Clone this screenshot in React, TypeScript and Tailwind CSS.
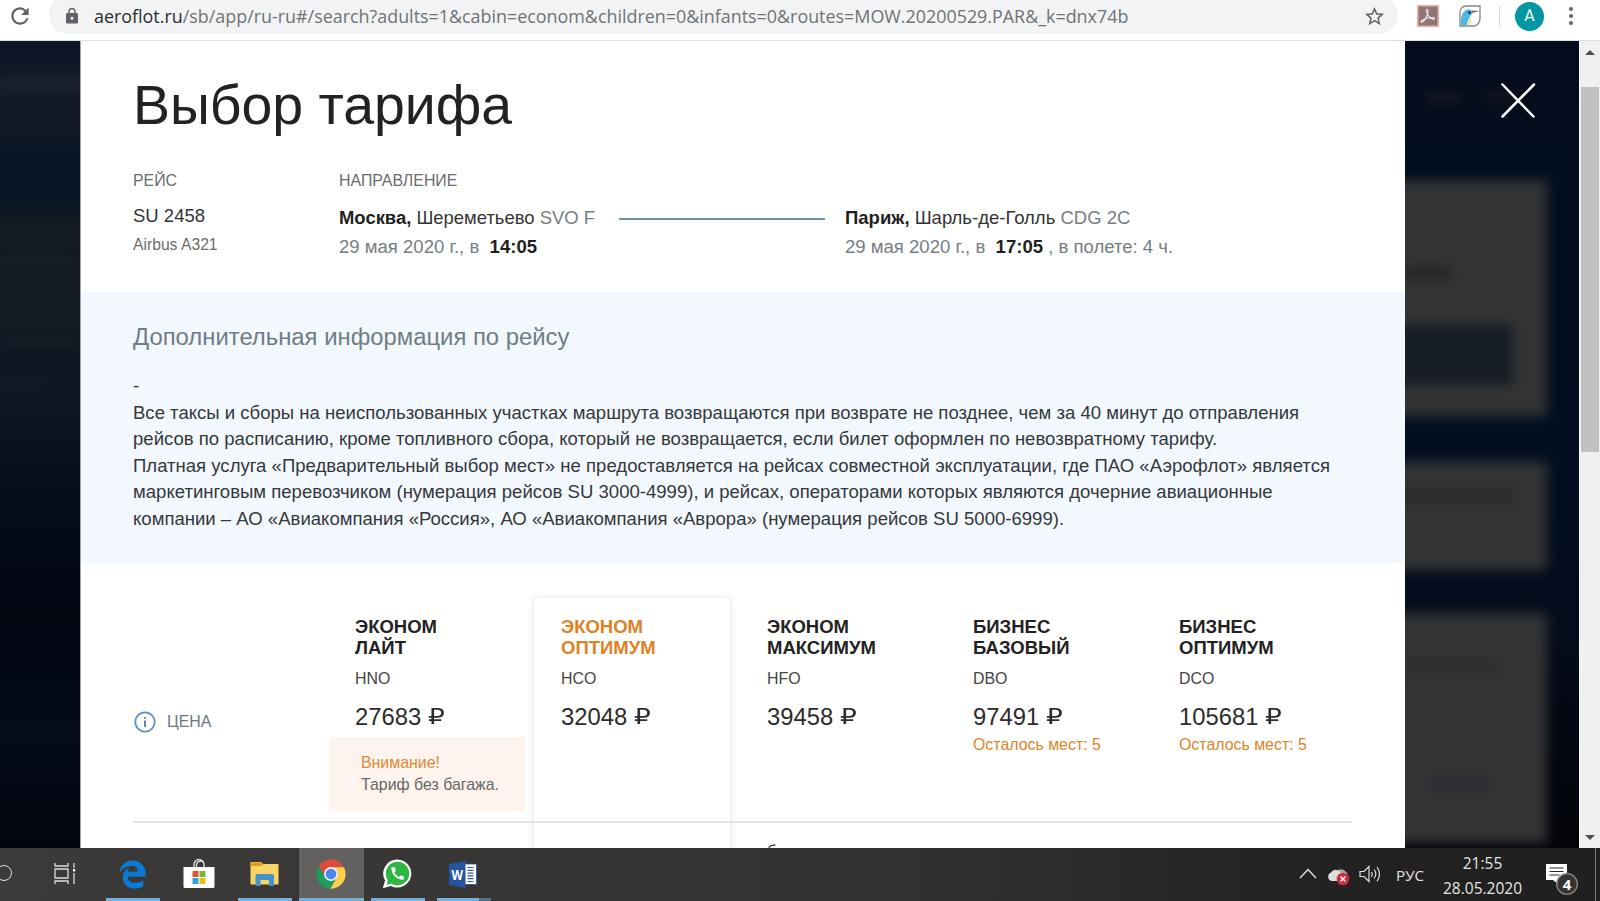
import type { ReactNode } from 'react';
import { FaEdgeLegacy } from 'react-icons/fa';
import { MdLock, MdRefresh, MdStarBorder } from 'react-icons/md';

const fares = [
  { name: ['ЭКОНОМ', 'ЛАЙТ'], code: 'HNO', price: '27683', warning: true },
  { name: ['ЭКОНОМ', 'ОПТИМУМ'], code: 'HCO', price: '32048', active: true },
  { name: ['ЭКОНОМ', 'МАКСИМУМ'], code: 'HFO', price: '39458' },
  { name: ['БИЗНЕС', 'БАЗОВЫЙ'], code: 'DBO', price: '97491', seats: 5 },
  { name: ['БИЗНЕС', 'ОПТИМУМ'], code: 'DCO', price: '105681', seats: 5 },
];

const infoLines = [
  '-',
  'Все таксы и сборы на неиспользованных участках маршрута возвращаются при возврате не позднее, чем за 40 минут до отправления',
  'рейсов по расписанию, кроме топливного сбора, который не возвращается, если билет оформлен по невозвратному тарифу.',
  'Платная услуга «Предварительный выбор мест» не предоставляется на рейсах совместной эксплуатации, где ПАО «Аэрофлот» является',
  'маркетинговым перевозчиком (нумерация рейсов SU 3000-4999), и рейсах, операторами которых являются дочерние авиационные',
  'компании – АО «Авиакомпания «Россия», АО «Авиакомпания «Аврора» (нумерация рейсов SU 5000-6999).',
];

function BrowserBar() {
  return (
    <header className="flex h-[41px] shrink-0 items-start overflow-hidden border-b border-[#dcdedf] bg-white font-['Open_Sans','Noto_Sans',sans-serif]">
      <div className="flex h-[32px] w-[49px] items-center pl-[7px] text-[#5f6368]">
        <MdRefresh size={26} />
      </div>
      <div className="-mt-1 flex h-[38px] w-[1349px] items-center rounded-full bg-[#f1f3f4] pl-[14px] pt-[2px] text-[#5f6368]">
        <MdLock size={18} />
        <p className="ml-[13px] flex-1 whitespace-nowrap text-[17.9px] leading-[30px] text-[#6f7376]">
          <span className="text-[#2b2d30]">aeroflot.ru</span>
          /sb/app/ru-ru#/search?adults=1&amp;cabin=econom&amp;children=0&amp;infants=0&amp;routes=MOW.20200529.PAR&amp;_k=dnx74b
        </p>
        <MdStarBorder size={23} className="mr-3" />
      </div>
      <div className="flex h-[32px] items-center">
        <svg width="22" height="22" viewBox="0 0 22 22" className="ml-[19px]">
          <rect x="1" y="1" width="20" height="20" fill="#8d7776" stroke="#e2998c" strokeWidth="1.6" />
          <path d="M10 4.200c1.500 0 1.300 3.200.4 5.600C9.300 12.700 7 16 5 17.300c-1.300.6-1.600-.8-.2-1.900 2.700-1.700 8-3.200 11.700-2.800 1.600.5 1 2.200-.7 1.700C13.500 13.500 9.800 9.800 9.300 6.200c-.1-1.200.1-2 .7-2z" fill="none" stroke="#eee6e4" strokeWidth="1.1" />
        </svg>
        <svg width="22" height="22" viewBox="0 0 22 22" className="ml-5">
          <path d="M7 1h14v13a7 7 0 0 1-7 7H1V7a6 6 0 0 1 6-6z" fill="#fff" stroke="#85898c" strokeWidth="1.3" />
          <path d="M2 20C1.500 13 3 5 9 4.500c2.500-.2 4 .8 4.600 2.300C13.500 10 9 12 8 20z" fill="#4fb5e4" />
          <path d="M8.500 20c0-4 1.500-6 3.600-8.500.8 3-.6 6-1.800 8.500z" fill="#f3e2a0" />
          <path d="M13 5.500 20.500 6 13.400 8z" fill="#626e78" />
          <circle cx="10.5" cy="7.5" r="1.5" fill="#173a60" />
        </svg>
        <div className="ml-[18px] h-[21px] w-px bg-[#d5d7d9]" />
        <div className="ml-[15px] grid h-[29px] w-[29px] place-items-center rounded-full bg-[#0097a3] font-['Roboto'] text-[16px] text-white">A</div>
        <div className="ml-[25px] flex flex-col gap-[3px]">
          <i className="h-1 w-1 rounded-full bg-[#5f6368]" />
          <i className="h-1 w-1 rounded-full bg-[#5f6368]" />
          <i className="h-1 w-1 rounded-full bg-[#5f6368]" />
        </div>
      </div>
    </header>
  );
}

/* Dimmed page to the left of the dialog */
function LeftBackdrop() {
  return (
    <div className="w-[81px] shrink-0 overflow-hidden border-r border-[#a3a7ac] bg-[linear-gradient(180deg,#0b1427_0%,#111a25_5%,#101825_11%,#061327_17%,#121a22_23%,#151b22_33%,#0f1823_38%,#101621_45%,#06101f_53%,#030915_64%,#020611_72%,#040b1a_86%,#02050d_100%)]">
      <div className="mt-[38px] h-3 w-[90px] bg-[#2a2f36]/50 blur-[6px]" />
      <div className="mt-[165px] h-2 w-[70px] bg-[#282c30]/30 blur-[5px]" />
      <div className="mt-[76px] h-2 w-[80px] bg-[#26292e]/40 blur-[5px]" />
      <div className="mt-[31px] h-2 w-[44px] bg-[#26292e]/40 blur-[5px]" />
    </div>
  );
}

/* Dimmed page to the right, with the dialog's close cross */
function RightBackdrop() {
  return (
    <div className="relative h-full flex-1 overflow-hidden bg-[linear-gradient(180deg,#030c1d_0%,#030e1f_20%,#030f20_55%,#040c1c_72%,#03060e_90%,#020409_100%)]">
      <div className="flex h-[139px] gap-5 pl-5 pt-[50px]">
        <div className="h-3 w-9 bg-[#14171f] blur-[5px]" />
        <div className="h-3 w-9 bg-[#10141c] blur-[5px]" />
      </div>
      <div className="-ml-5 h-[236px] w-[162px] bg-[#333] pt-[87px] blur-[6px]">
        <div className="ml-5 h-3 w-[46px] bg-[#242424]" />
        <div className="mt-[46px] h-[60px] w-[128px] bg-[#161d25]" />
      </div>
      <div className="-ml-5 mt-[46px] h-[108px] w-[162px] bg-[#333] pt-[28px] blur-[6px]">
        <div className="h-3 w-[130px] bg-[#2a2a2a]" />
      </div>
      <div className="-ml-5 mt-[43px] h-[230px] w-[162px] bg-[#333] pt-[48px] blur-[6px]">
        <div className="h-3 w-[112px] bg-[#2d2d2d]" />
        <div className="ml-[44px] mt-[105px] h-3 w-[60px] bg-[#292e33]" />
      </div>
      <svg width="36" height="38" viewBox="0 0 36 38" className="absolute left-[95px] top-[41px]" stroke="#fff" strokeWidth="2.5" strokeLinecap="round">
        <path d="M2.500 2.500 33.500 34.500M34 2.500 2.500 34.500" />
      </svg>
    </div>
  );
}

function Scrollbar() {
  return (
    <div className="flex w-[21px] shrink-0 flex-col items-center border-l border-white bg-[#f0f0f0]">
      <svg width="10" height="5" viewBox="0 0 10 5" className="mt-[9px]"><path d="M5 0l5 5H0z" fill="#505050" /></svg>
      <div className="mt-[32px] h-[365px] w-[18px] bg-[#c1c1c1]" />
      <svg width="10" height="5" viewBox="0 0 10 5" className="mb-2 mt-auto"><path d="M5 5l5-5H0z" fill="#505050" /></svg>
    </div>
  );
}

function FlightHeader() {
  return (
    <section className="h-[251px] px-[52px] pt-8">
      <h1 className="text-[55.4px] leading-[64px] text-[#222]">Выбор тарифа</h1>
      <div className="mt-[34px] flex whitespace-nowrap text-[18.5px] text-[#333]">
        <div className="w-[206px]">
          <p className="text-[15.9px] leading-5 text-[#6c6c6c]">РЕЙС</p>
          <p className="mt-[13px] leading-6">SU 2458</p>
          <p className="mt-[7px] text-[15.7px] leading-5 text-[#6c6c6c]">Airbus A321</p>
        </div>
        <div className="w-[280px]">
          <p className="text-[15.9px] leading-5 text-[#6c6c6c]">НАПРАВЛЕНИЕ</p>
          <p className="mt-[12px] text-[18.45px] leading-[29px]">
            <b className="text-[#1f1f1f]">Москва,</b> Шереметьево <span className="text-[#757e85]">SVO F</span>
          </p>
          <p className="text-[18.56px] leading-[30px] text-[#757e85]">
            29 мая 2020 г., в&nbsp; <b className="text-[#1f1f1f]">14:05</b>
          </p>
        </div>
        <div className="mt-[47px] h-[2px] w-[206px] bg-[#6d93a8]" />
        <div className="ml-5 pt-[32px]">
          <p className="leading-[29px]">
            <b className="text-[#1f1f1f]">Париж,</b> Шарль-де-Голль <span className="text-[#757e85]">CDG 2C</span>
          </p>
          <p className="text-[18.56px] leading-[30px] text-[#757e85]">
            29 мая 2020 г., в&nbsp; <b className="text-[#1f1f1f]">17:05</b> , в полете: 4 ч.
          </p>
        </div>
      </div>
    </section>
  );
}

function FlightInfo() {
  return (
    <section className="h-[271px] bg-[#f3f8fe] px-[52px] pt-[29px]">
      <h2 className="text-[23.85px] leading-8 text-[#6f7d87]">Дополнительная информация по рейсу</h2>
      <div className="mt-5 whitespace-nowrap text-[18.56px] leading-[26.5px] text-[#33383d]">
        {infoLines.map((line) => (
          <p key={line}>{line}</p>
        ))}
      </div>
    </section>
  );
}

function FareTable() {
  return (
    <section className="px-[52px] pt-[34px]">
      <div className="relative">
        <div className="absolute left-[401px] top-px h-[300px] w-[196px] rounded-[3px] bg-white shadow-[0_0_6px_rgba(60,60,80,0.16)]" />
        <div className="relative flex h-[226px] w-[1219px] border-b-2 border-[#dfe5ea]">
          <div className="flex w-[196px] shrink-0 items-start gap-[11px] pl-px pt-[114px]">
            <svg width="22" height="22" viewBox="0 0 22 22">
              <circle cx="11" cy="11" r="9.7" fill="none" stroke="#5b93c8" strokeWidth="1.8" />
              <path d="M11 9.500v6.500M11 6v1.800" stroke="#5b86b5" strokeWidth="2" />
            </svg>
            <span className="pt-px text-[15.9px] leading-5 text-[#6f7880]">ЦЕНА</span>
          </div>
          <div className="flex gap-[10px] whitespace-nowrap">
            {fares.map((fare) => (
              <div key={fare.code} className="w-[196px] pt-[19px]">
                <div className="pl-[26px]">
                  <h3 className={`text-[18.5px] font-bold leading-[21.3px] ${fare.active ? 'text-[#e0801f]' : 'text-[#222]'}`}>
                    {fare.name[0]}
                    <br />
                    {fare.name[1]}
                  </h3>
                  <p className="mt-[10px] text-[15.9px] leading-5 text-[#444]">{fare.code}</p>
                  <p className="mt-[14px] flex gap-[7px] text-[23.8px] leading-7 text-[#2c2c2c]">
                    {fare.price}
                    <span className="origin-left scale-x-[1.26] font-['DejaVu_Sans'] text-[21px]">₽</span>
                  </p>
                  {fare.seats && <p className="mt-1 text-[15.9px] leading-5 text-[#dc8426]">Осталось мест: {fare.seats}</p>}
                </div>
                {fare.warning && (
                  <div className="mt-[6px] h-[74px] bg-[#fef3ed] pl-[32px] pt-[15px] text-[15.9px] leading-[22px] text-[#666]">
                    <p className="text-[#d98a3a]">Внимание!</p>
                    <p>Тариф без багажа.</p>
                  </div>
                )}
              </div>
            ))}
          </div>
        </div>
        <p className="relative pl-[634px] pt-[18px] text-[16.4px] leading-5 text-[#333]">б</p>
      </div>
    </section>
  );
}

function Task({ children, line, active }: { children?: ReactNode; line?: ReactNode; active?: boolean }) {
  return (
    <div className={`flex w-[66.25px] flex-col items-center ${active ? 'bg-[linear-gradient(90deg,transparent_1px,#636160_1px)]' : ''}`}>
      <div className="grid h-[50px] w-full place-items-center">{children}</div>
      {line}
    </div>
  );
}

function Taskbar() {
  return (
    <footer className="flex h-[53px] shrink-0 overflow-hidden bg-[linear-gradient(90deg,#3d3b39_0%,#383634_30%,#32302e_60%,#242322_80%,#201f1f_100%)] font-['Open_Sans','Noto_Sans',sans-serif] text-[#e4e4e4]">
      <div className="w-[33px] pt-[17px]">
        <div className="-ml-1 h-[16px] w-[16px] rounded-full border-[1.5px] border-[#dedede]" />
      </div>
      <Task>
        <svg width="22" height="21" viewBox="0 0 22 21" fill="none" stroke="#dcdcdc" strokeWidth="1.3" className="-ml-[2px]">
          <path d="M1 0v3h13V0M1 6h13v9H1zM1 21v-3h13v3M20 0v5M20 10v11" />
          <rect x="19" y="6" width="2.2" height="2.5" fill="#fff" stroke="none" />
        </svg>
      </Task>
      <Task line={<div className="ml-px h-[3px] w-[54px] bg-[#76b1de]" />}>
        <FaEdgeLegacy size={29} className="mt-[3px] text-[#0b7ad6]" />
      </Task>
      <Task>
        <svg width="32" height="32" viewBox="0 0 32 32" className="-mt-px">
          <path d="M11 11V7.500a5 5 0 0 1 10 0V11M13.500 11V7.500a4 4 0 0 1 7-2" fill="none" stroke="#ddd" strokeWidth="1.4" />
          <path d="M.5 10h31v19.500a1.500 1.500 0 0 1-1.500 1.500H2a1.500 1.500 0 0 1-1.500-1.500z" fill="#fff" />
          <path d="M9.500 14h6v6h-6z" fill="#e3532b" />
          <path d="M16.500 14h6v6h-6z" fill="#7db72f" />
          <path d="M9.500 21h6v6h-6z" fill="#2aa5e0" />
          <path d="M16.500 21h6v6h-6z" fill="#f2b91d" />
        </svg>
      </Task>
      <Task line={<div className="h-[3px] w-[54px] bg-[#76b1de]" />}>
        <svg width="29" height="24" viewBox="0 0 29 24" className="mt-[2px]">
          <path d="M1 0h10l2 2h14.500a1 1 0 0 1 1 1v19.500H.5V.5z" fill="#f8d564" />
          <path d="M.5.5h11l2 1.700-2 1.800H.5z" fill="#d99e1b" />
          <path d="M5.500 24v-10.500a1.500 1.500 0 0 1 1.500-1.500h15.500a1.500 1.500 0 0 1 1.500 1.500V24h-5v-6h-8.500v6z" fill="#4593c8" />
        </svg>
      </Task>
      <Task active line={<div className="h-[3px] w-[65px] bg-[#76b1de]" />}>
        <svg width="32" height="32" viewBox="0 0 48 48" className="mt-[2px]">
          <path d="M24 14H43.600A22 22 0 0 0 5.550 12.020L15.340 29A10 10 0 0 1 24 14z" fill="#dd4b3e" />
          <path d="M32.660 29L22.900 45.970A22 22 0 0 0 43.600 14H24A10 10 0 0 1 32.660 29z" fill="#fcd04a" />
          <path d="M15.340 29L5.550 12.020A22 22 0 0 0 22.900 45.970L32.660 29A10 10 0 0 1 15.340 29z" fill="#1c9c58" />
          <circle cx="24" cy="24" r="10.5" fill="#f2f2f2" />
          <circle cx="24" cy="24" r="8" fill="#4a86ec" />
        </svg>
      </Task>
      <Task line={<div className="ml-px h-[3px] w-[54px] bg-[#76b1de]" />}>
        <svg width="30" height="30" viewBox="0 0 30 30" className="mt-[2px]">
          <path d="M15.500.5a14 14 0 1 1-6.700 26.400L.8 29.300l2.300-7.800A14 14 0 0 1 15.500.5z" fill="#fff" />
          <path d="M15.500 2.800a11.800 11.800 0 1 1-6.300 21.800l-4.700 1.300 1.400-4.600A11.800 11.800 0 0 1 15.500 2.800z" fill="#2cb742" />
          <path transform="translate(7.300 6.300) scale(.69)" d="M20.010 15.380c-1.230 0-2.420-.2-3.530-.56-.35-.12-.74-.03-1.010.24l-1.570 1.970c-2.830-1.350-5.480-3.900-6.890-6.830l1.950-1.660c.27-.28.35-.67.24-1.020-.37-1.110-.56-2.300-.56-3.530 0-.54-.45-.99-.99-.99H4.190C3.650 3 3 3.240 3 3.990 3 13.280 10.730 21 20.010 21c.71 0 .99-.63.99-1.180v-3.450c0-.54-.45-.99-.99-.99z" fill="#fff" />
        </svg>
      </Task>
      <Task line={<div className="flex h-[3px] w-[54px]"><i className="w-[42px] bg-[#76b1de]" /><i className="w-3 bg-[#51718a]" /></div>}>
        <svg width="28" height="27" viewBox="0 0 28 27" className="-ml-px mt-[2px]">
          <path d="M14 3h13.500v20.500H14z" fill="#fff" stroke="#2b579a" strokeWidth=".8" />
          <path d="M18.500 6.500h6M18.500 9.300h6M18.500 12.100h6M18.500 14.900h6M18.500 17.700h6M18.500 20.500h6" stroke="#2b579a" strokeWidth="1.2" />
          <path d="M0 3 16.500 0v27L0 24z" fill="#2655a0" />
          <text x="8.3" y="18.5" textAnchor="middle" fontFamily="Open Sans" fontSize="14" fontWeight="700" textLength="11.5" lengthAdjust="spacingAndGlyphs" fill="#fff">W</text>
        </svg>
      </Task>

      {/* Tray */}
      <div className="ml-auto flex items-start">
        <svg width="18" height="11" viewBox="0 0 18 11" className="mt-[20px]" fill="none" stroke="#e0e0e0" strokeWidth="1.4"><path d="M1 10l8-8.500 8 8.500" /></svg>
        <svg width="23" height="20" viewBox="0 0 23 20" className="ml-[10px] mt-[18px]">
          <path d="M8 10a6 6 0 0 1 11-4c3 2 2 7-1 8H8z" fill="#aaa" />
          <path d="M4.500 15a4.500 4.500 0 0 1-.5-8.500 5.500 5.500 0 0 1 10 1.500c4 1 4 6 1 7z" fill="#ddd" />
          <circle cx="16" cy="13" r="6.3" fill="#cf2b3c" />
          <path d="M13.500 10.500l5 5m0-5l-5 5" stroke="#fff" strokeWidth="1.5" />
        </svg>
        <svg width="22" height="19" viewBox="0 0 22 19" className="ml-[9px] mt-[17px]" fill="none" stroke="#ddd" strokeWidth="1.2">
          <path d="M1 6.500h4l5-5v15l-5-5H1zM12.500 7q1.500 2.300 0 4.600M15.200 4.500q3.200 4.500 0 9M18 2q5 7.200 0 14.300" />
        </svg>
        <span className="ml-[15px] mt-[15px] w-[28px] text-[15.2px] leading-6">РУС</span>
        <div className="ml-[19px] flex w-[79px] flex-col items-center whitespace-nowrap pt-[3px] text-[15.5px] leading-[24.5px]">
          <span>21:55</span>
          <span>28.05.2020</span>
        </div>
        <svg width="36" height="34" viewBox="0 0 36 34" className="ml-[23px] mt-[14px]">
          <path d="M1 2h21v16h-9v4l-5-4H1z" fill="#fff" />
          <path d="M4.500 6h14M4.500 9.500h14M4.500 13h10" stroke="#292827" strokeWidth="1.2" />
          <circle cx="22" cy="22" r="10.3" fill="#353433" stroke="#888" strokeWidth="1.3" />
          <text x="22" y="27.5" textAnchor="middle" fontFamily="Open Sans" fontSize="15" fontWeight="700" fill="#fff">4</text>
        </svg>
        <div className="ml-[14px] mr-1 h-[53px] w-px bg-[#777]" />
      </div>
    </footer>
  );
}

export default function App() {
  return (
    <div className="flex h-[901px] w-[1600px] flex-col overflow-hidden bg-white">
      <BrowserBar />
      <div className="flex h-[807px] shrink-0 overflow-hidden">
        <LeftBackdrop />
        <main className="w-[1324px] shrink-0 overflow-hidden bg-white font-['Liberation_Sans',Arial,sans-serif]">
          <FlightHeader />
          <FlightInfo />
          <FareTable />
        </main>
        <RightBackdrop />
        <Scrollbar />
      </div>
      <Taskbar />
    </div>
  );
}
